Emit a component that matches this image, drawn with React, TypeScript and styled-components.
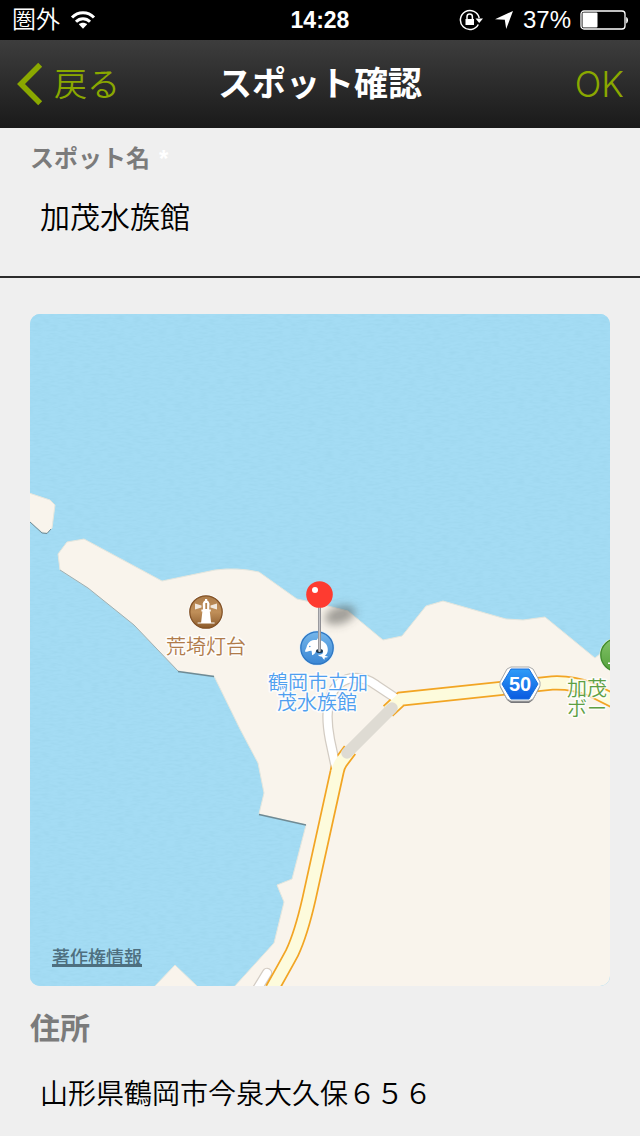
import React from "react";
import styled, { createGlobalStyle } from "styled-components";

const jp = `"Liberation Sans", "Noto Sans CJK JP", sans-serif`;
const cjk = `"Noto Sans CJK JP", sans-serif`;

const GlobalStyle = createGlobalStyle`
  *, *::before, *::after { box-sizing: border-box; }
  body {
    margin: 0;
    background: #efefef;
    color: #000;
    font-family: ${cjk};
  }
`;

const Screen = styled.div`
  display: flex;
  flex-direction: column;
  min-height: 100vh;
`;

const StatusBar = styled.div`
  display: grid;
  grid-template-columns: 1fr auto 1fr;
  align-items: center;
  height: 40px;
  padding: 0 12px;
  background: #000;
  color: #fff;
  font-size: 24px;
  line-height: 40px;
`;

const StatusGroup = styled.div<{ $end?: boolean }>`
  display: flex;
  align-items: center;
  justify-content: ${(p) => (p.$end ? "flex-end" : "flex-start")};
  gap: ${(p) => (p.$end ? 9 : 10)}px;
  font-family: ${jp};
  font-weight: 350;
`;

const Clock = styled.time`
  font-family: ${jp};
  font-weight: 700;
  font-size: 23px;
`;

const NavBar = styled.header`
  display: grid;
  grid-template-columns: 1fr auto 1fr;
  align-items: center;
  height: 88px;
  padding: 0 16px;
  background: linear-gradient(#3d3d3d, #1a1a1a);
`;

const NavButton = styled.button<{ $end?: boolean }>`
  display: flex;
  align-items: center;
  gap: 10px;
  justify-self: ${(p) => (p.$end ? "end" : "start")};
  padding: 0;
  border: 0;
  background: none;
  color: #8aa800;
  font-family: ${(p) => (p.$end ? `Inter, ${jp}` : cjk)};
  font-weight: ${(p) => (p.$end ? 300 : 350)};
  font-size: ${(p) => (p.$end ? 35 : 33)}px;
  line-height: 44px;
  cursor: pointer;
`;

const BackText = styled.span`
  padding-bottom: 4px;
`;

const Title = styled.h1`
  margin: 0;
  padding-bottom: 4px;
  color: #fff;
  font-size: 34px;
  line-height: 44px;
  font-weight: 700;
`;

const Field = styled.div<{ $ruled?: boolean }>`
  display: flex;
  flex-direction: column;
  padding: ${(p) => (p.$ruled ? "11px 30px 31px" : "22px 30px 12px")};
  gap: ${(p) => (p.$ruled ? 10 : 18)}px;
  border-bottom: ${(p) => (p.$ruled ? "2px solid #2c2c2c" : "0")};
`;

const Label = styled.label<{ $large?: boolean }>`
  color: #7b7b7b;
  font-weight: 700;
  font-size: ${(p) => (p.$large ? 30 : 24)}px;
  line-height: 36px;
`;

const Required = styled.span`
  margin-left: 9px;
  color: #fff;
  font-family: "Liberation Sans", sans-serif;
  line-height: 20px;
`;

const TextBox = styled.input<{ $size: number }>`
  width: 100%;
  height: 60px;
  padding: 0 10px;
  border: 0;
  background: transparent;
  color: #000;
  font-family: ${cjk};
  font-weight: 350;
  font-size: ${(p) => p.$size}px;
`;

const MapCard = styled.section`
  position: relative;
  margin: 36px 30px 0;
  border-radius: 10px;
  overflow: hidden;
  background: #a2daf2;
`;

const MapArt = styled.svg`
  display: block;
  width: 100%;
  height: auto;
  font-family: ${cjk};
`;

const MapLabel = styled.text`
  font-size: 20px;
  font-weight: 350;
  text-anchor: middle;
  stroke: #fff;
  stroke-width: 3px;
  stroke-opacity: 0.8;
  stroke-linejoin: round;
  paint-order: stroke;
`;

const ShieldNumber = styled.text`
  font-family: "Liberation Sans", sans-serif;
  font-weight: 700;
  font-size: 20px;
  text-anchor: middle;
  fill: #fff;
`;

const Legal = styled.a`
  position: absolute;
  left: 22px;
  bottom: 17px;
  color: #4e6f7f;
  font-size: 18px;
  font-weight: 500;
  line-height: 26px;
  text-decoration: underline;
  text-decoration-thickness: 3px;
  text-underline-offset: 0;
  text-decoration-skip-ink: none;
`;

const WifiIcon = () => (
  <svg width="26" height="20" viewBox="0 0 26 20" aria-hidden="true">
    <g fill="none" stroke="#fff" strokeWidth="3">
      <path d="M2 7.500C8 1.200 18 1.200 24 7.500" />
      <path d="M6 11.800C10 7.800 16 7.800 20 11.800" />
    </g>
    <path d="M8.800 14.200c2.300-2 6.100-2 8.400 0L13 18.700z" fill="#fff" />
  </svg>
);

const LockIcon = () => (
  <svg width="26" height="22" viewBox="0 0 26 22" aria-hidden="true">
    <path d="M19.300 15.500A9.500 9.500 0 1 1 20.200 9" fill="none" stroke="#fff" strokeWidth="1.500" />
    <path d="M16.500 9.500h7.500l-3.800 4.600z" fill="#fff" />
    <rect x="6.500" y="10" width="8.500" height="6" fill="#fff" />
    <path d="M8 10.500V7.800a2.700 2.700 0 0 1 5.400 0v2.700" fill="none" stroke="#fff" strokeWidth="1.500" />
  </svg>
);

const ArrowIcon = () => (
  <svg width="20" height="20" viewBox="0 0 20 20" aria-hidden="true">
    <path d="M19 1L12.200 19l-1.400-9.300L1 9.200z" fill="#fff" />
  </svg>
);

const BatteryIcon = () => (
  <svg width="48" height="20" viewBox="0 0 48 20" aria-hidden="true">
    <rect x="1" y="1" width="44" height="18" rx="3" fill="none" stroke="#fff" strokeWidth="1.300" />
    <rect x="2.500" y="2.500" width="15" height="15" rx="1" fill="#fff" />
    <path d="M46.200 7c2.400.6 2.400 6 0 6.600z" fill="#fff" />
  </svg>
);

const BackIcon = () => (
  <svg width="28" height="44" viewBox="0 0 28 44" aria-hidden="true">
    <path d="M24.200 2.800L5 22l19.200 19.200" fill="none" stroke="#8aa800" strokeWidth="5.600" />
  </svg>
);

const mainland =
  "M58 554L67 542L84 539L162 581L215 570Q237 567 259 572L297 599L320 604L348 611L383 640L402 636L426 606L443 601L506 619L523 620L545 617L595 658L611 645V987H234L274 943L284 902L277 885L292 879L306 825L259 814L264 793L258 763L240 729L214 676L178 671L134 625L88 588L60 570Z";
const coastRoad = "M616 702L590 689Q572 682 552 683L401 699L388 711";
const southRoad = "M350 750L341 762Q338 766 337 772L309 899Q301 934 292 953Q285 966 272 989";
const lane = "M336 768L330 740Q325 714 330 698Q337 678 356 678Q367 678 376 685L397 699";

const SpotMap = () => (
  <MapArt viewBox="30 314 580 672" role="img" aria-label="地図">
    <defs>
      <linearGradient id="brown" x2="0" y2="1">
        <stop stopColor="#ad7d4b" />
        <stop offset=".5" stopColor="#c08f59" />
        <stop offset="1" stopColor="#8b5a2b" />
      </linearGradient>
      <linearGradient id="blue" x2="0" y2="1">
        <stop stopColor="#75b6ea" />
        <stop offset="1" stopColor="#3a86d4" />
      </linearGradient>
      <linearGradient id="green" x2="0" y2="1">
        <stop stopColor="#82c368" />
        <stop offset="1" stopColor="#54a03b" />
      </linearGradient>
      <linearGradient id="shield" x2="0" y2="1">
        <stop stopColor="#2f9cf8" />
        <stop offset="1" stopColor="#0a5be0" />
      </linearGradient>
      <linearGradient id="needle">
        <stop stopColor="#85858a" />
        <stop offset=".5" stopColor="#c4c4c8" />
        <stop offset="1" stopColor="#77777c" />
      </linearGradient>
      <filter id="ripples" x="0" y="0" width="1" height="1">
        <feTurbulence type="fractalNoise" baseFrequency=".12 .5" numOctaves="2" seed="4" />
        <feColorMatrix values="0 0 0 0 .25  0 0 0 0 .55  0 0 0 0 .7  .4 0 0 0 -.15" />
      </filter>
      <filter id="soft" x="-50%" y="-100%" width="200%" height="300%">
        <feGaussianBlur stdDeviation="4" />
      </filter>
    </defs>

    <rect x="30" y="314" width="580" height="672" fill="#a4dcf4" />
    <rect x="30" y="314" width="580" height="672" filter="url(#ripples)" />

    <g fill="#f9f4ec" stroke="#e4e6de" strokeWidth="1">
      <path d="M29 493L50 500L55 505L52 528L47 533L42 532L29 521Z" />
      <path d={mainland} />
      <path d="M154 987L175 965L198 987Z" />
    </g>
    <g fill="none" stroke="#6f8a94" strokeWidth="1">
      <path d="M30 522L42 533L47 533.500L51 529" />
      <path d="M60 570L88 588L134 625L178 671" strokeOpacity=".6" />
      <path d="M178 671.500L214 676.500M259 814.500L306 825" strokeWidth="1.400" />
    </g>

    <g fill="none">
      <g strokeLinecap="round">
        <path d={lane} stroke="#d3ccc3" strokeWidth="10.500" />
        <path d="M267 973L256 991" stroke="#d3ccc3" strokeWidth="10.500" />
        <path d="M267 973L256 991" stroke="#fff" strokeWidth="8" />
      </g>
      <path d={coastRoad} stroke="#f2a524" strokeWidth="15" />
      <path d={southRoad} stroke="#f2a524" strokeWidth="15" />
      <path d={lane} stroke="#fff" strokeWidth="8" />
      <path d={coastRoad} stroke="#fdfbdc" strokeWidth="11.500" />
      <path d={southRoad} stroke="#fdfbdc" strokeWidth="11.500" />
      <path d="M347 753L392 708" stroke="#dedbd3" strokeWidth="11.500" strokeLinecap="round" />
    </g>

    <g>
      <path d="M511 667h18l4 2 7 13v4l-7 13-4 3h-18l-4-3-7-13v-4l7-13z" transform="translate(0 1)" fill="#77777a" />
      <path d="M511 667h18l4 2 7 13v4l-7 13-4 2h-18l-4-2-7-13v-4l7-13z" fill="#fff" stroke="#aaa" strokeWidth="1" />
      <path d="M511 669h18l9 15-9 15h-18l-9-15z" fill="url(#shield)" stroke="#176fdc" strokeWidth="1" />
      <ShieldNumber x="520" y="691">50</ShieldNumber>
    </g>

    <g>
      <circle cx="206" cy="612" r="17.500" fill="#fff" />
      <circle cx="206" cy="612" r="16.200" fill="url(#brown)" stroke="#835226" strokeWidth="1.300" />
      <path d="M203 609.500l-.3-6 1.100-2.300 1.200-.7V599h2.200v1.500l1.200.7 1.100 2.300-.3 6h1.600v2h-1l1.300 11h3.500v1h-17v-1h3.500l1.300-11h-1v-2z" fill="#fff" />
      <path d="M205.300 603h1.800v6h-1.800z" fill="#b5854f" />
      <path d="M195 603.500l6.500 2v2l-6.500 2zM217 603.500l-6.500 2v2l6.500 2z" fill="#fff" fillOpacity=".8" />
    </g>

    <g>
      <circle cx="317" cy="648" r="17.500" fill="#d9ecfb" />
      <circle cx="317" cy="648" r="16.200" fill="url(#blue)" stroke="#2d76c2" strokeWidth="1.300" />
      <path d="M305 651.500c.3-1.800.8-2.600 1.300-3.500.8-4 3-6.800 6.200-7.700 1.700-.5 3-.4 4.200-.4.900-1.500 2.200-2.600 3.500-2.900 0 1.400.1 2.500.6 3.500 4.500 1.300 7.100 5 7 9.500 0 2.600-1.300 4.500-3 6 1.300.1 2.500.3 3.200 1-1.300.5-2.600.4-3.400.7.2 1 .1 1.600-.3 2-1.300-1-1.800-1.900-2.300-2.900-1.600-.1-3.300-.8-4.200-2 2.500.1 4.800-.5 5.500-2.300-2-1.500-4.500-1.800-7.300-1.600-.4 1.700-1.600 3.400-4 4.400.1-1.700-.1-3-.5-4.500-1.500-.1-2.800.2-3.700.6-1 .4-2.200.600-2.800.1z" fill="#fff" />
      <circle cx="309.800" cy="646.500" r=".8" fill="#4b92d9" />
    </g>

    <g>
      <circle cx="617" cy="655" r="17.500" fill="#e4f2de" />
      <circle cx="617" cy="655" r="16.200" fill="url(#green)" stroke="#3f8a2b" strokeWidth="1.300" />
      <path d="M608 662.500h5v1.500h-5z" fill="#fff" />
    </g>

    <MapLabel x="206" y="654" fill="#b07b4a">荒埼灯台</MapLabel>
    <MapLabel fill="#4f9ff0">
      <tspan x="318" y="690">鶴岡市立加</tspan>
      <tspan x="317" y="710">茂水族館</tspan>
    </MapLabel>
    <MapLabel fill="#5da044">
      <tspan x="587" y="696">加茂</tspan>
      <tspan x="587" y="716">ボー</tspan>
    </MapLabel>

    <ellipse cx="340" cy="615" rx="16" ry="9" fill="#4a4a46" fillOpacity=".5" filter="url(#soft)" transform="rotate(-18 340 615)" />
    <ellipse cx="319.500" cy="651" rx="3.500" ry="2" fill="#1d3850" />
    <rect x="318" y="606" width="3" height="46" rx="1.500" fill="url(#needle)" />
    <circle cx="319.500" cy="594.500" r="13.300" fill="#fe3b30" />
    <circle cx="315" cy="590" r="3" fill="#fff" />
  </MapArt>
);

export default function App() {
  return (
    <Screen>
      <GlobalStyle />
      <StatusBar>
        <StatusGroup>
          <span>圏外</span>
          <WifiIcon />
        </StatusGroup>
        <Clock>14:28</Clock>
        <StatusGroup $end>
          <LockIcon />
          <ArrowIcon />
          <span>37%</span>
          <BatteryIcon />
        </StatusGroup>
      </StatusBar>
      <NavBar>
        <NavButton type="button">
          <BackIcon />
          <BackText>戻る</BackText>
        </NavButton>
        <Title>スポット確認</Title>
        <NavButton type="button" $end>
          OK
        </NavButton>
      </NavBar>
      <main>
        <Field $ruled>
          <Label htmlFor="spot">
            スポット名<Required>*</Required>
          </Label>
          <TextBox id="spot" $size={30} defaultValue="加茂水族館" />
        </Field>
        <MapCard>
          <SpotMap />
          <Legal href="#legal">著作権情報</Legal>
        </MapCard>
        <Field>
          <Label htmlFor="address" $large>
            住所
          </Label>
          <TextBox id="address" $size={28} defaultValue="山形県鶴岡市今泉大久保６５６" />
        </Field>
      </main>
    </Screen>
  );
}
